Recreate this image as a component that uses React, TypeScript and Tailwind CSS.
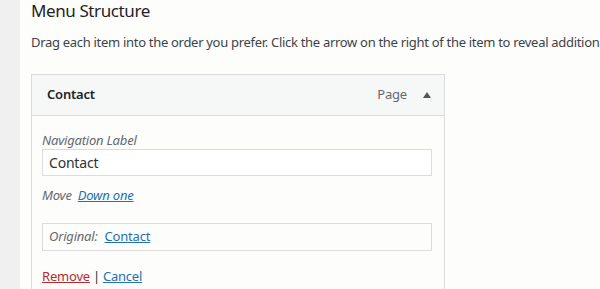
export default function App() {
  return (
    <div
      className="flex h-[289px] w-[600px] overflow-hidden bg-[#fdfdfc] text-[#3c434a]"
      style={{ fontFamily: '"Noto Sans", "Open Sans", sans-serif' }}
    >
      {/* Left admin strip */}
      <div className="w-[20px] shrink-0 bg-[#f0f0f0]" />

      <div className="min-w-0 flex-1 pl-[11px]">
        <h3 className="-mt-[1px] whitespace-nowrap text-[17px] font-normal leading-[24px] tracking-[-0.4px] text-[#1d2327]">
          Menu Structure
        </h3>
        <p className="mt-[10px] whitespace-nowrap text-[13px] leading-[18px] tracking-[-0.3px]">
          Drag each item into the order you prefer. Click the arrow on the right of the item to reveal additional configuration options.
        </p>

        {/* Menu item card */}
        <div className="mt-[23px] w-[414px] border border-[#dcdcde] bg-[#fdfdfc] tracking-[-0.2px]">
          <div className="flex h-[41px] items-center justify-between border-b border-[#dcdcde] bg-[#f6f7f7] pl-[15px] pr-[12px]">
            <span className="text-[13px] font-semibold text-[#1d2327]">Contact</span>
            <div className="flex items-center">
              <span className="text-[13px] text-[#646970]">Page</span>
              <svg className="ml-[15px]" width="10" height="8" viewBox="0 0 10 8">
                <path d="M5 1 L9 7 L1 7 Z" fill="#50575e" />
              </svg>
            </div>
          </div>

          <div className="px-[10px] pb-[10px] pt-[15px]">
            <label className="block text-[13px] italic leading-[18px] text-[#646970]">
              Navigation Label
            </label>
            <div className="flex h-[27px] w-[390px] items-center border border-[#dcdcde] bg-white px-[6px] text-[14px] text-[#2c3338]">
              Contact
            </div>

            <div className="mt-[10px] flex items-center text-[13px] leading-[18px]">
              <span className="italic text-[#646970]">Move</span>
              <a className="ml-[6px] italic text-[#2271b1] underline" href="#">
                Down one
              </a>
            </div>

            <div className="mt-[19px] flex h-[28px] w-[390px] items-center border border-[#dcdcde] px-[6px] text-[13px]">
              <span className="italic text-[#646970]">Original:</span>
              <a className="ml-[7px] text-[#2271b1] underline" href="#">
                Contact
              </a>
            </div>

            <div className="mt-[16px] text-[13px] leading-[18px]">
              <a className="text-[#b32d2e] underline" href="#">
                Remove
              </a>
              <span className="mx-[3px] text-[#2c3338]">|</span>
              <a className="text-[#2271b1] underline" href="#">
                Cancel
              </a>
            </div>
          </div>
        </div>
      </div>
    </div>
  );
}
